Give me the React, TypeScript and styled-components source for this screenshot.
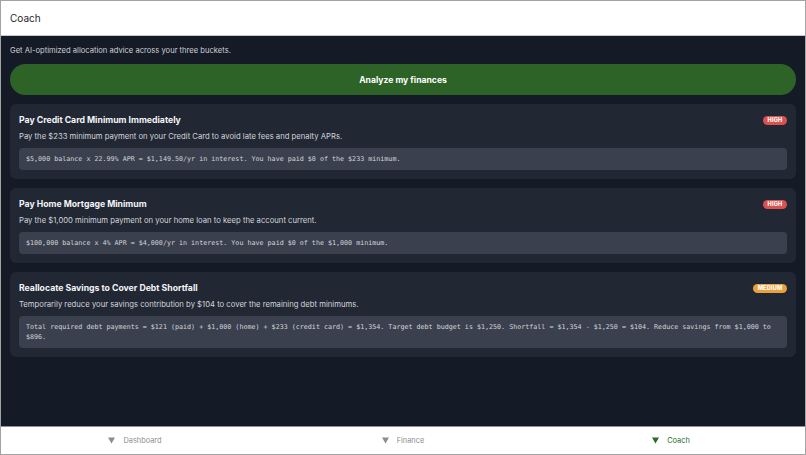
import React from "react";
import styled, { createGlobalStyle } from "styled-components";

type Priority = "high" | "medium";

interface Advice {
  id: string;
  title: string;
  description: string;
  detail: string;
  priority: Priority;
}

const advice: Advice[] = [
  {
    id: "cc",
    title: "Pay Credit Card Minimum Immediately",
    description:
      "Pay the $233 minimum payment on your Credit Card to avoid late fees and penalty APRs.",
    detail:
      "$5,000 balance x 22.99% APR = $1,149.50/yr in interest. You have paid $0 of the $233 minimum.",
    priority: "high",
  },
  {
    id: "home",
    title: "Pay Home Mortgage Minimum",
    description:
      "Pay the $1,000 minimum payment on your home loan to keep the account current.",
    detail:
      "$100,000 balance x 4% APR = $4,000/yr in interest. You have paid $0 of the $1,000 minimum.",
    priority: "high",
  },
  {
    id: "savings",
    title: "Reallocate Savings to Cover Debt Shortfall",
    description:
      "Temporarily reduce your savings contribution by $104 to cover the remaining debt minimums.",
    detail:
      "Total required debt payments = $121 (paid) + $1,000 (home) + $233 (credit card) = $1,354. Target debt budget is $1,250. Shortfall = $1,354 - $1,250 = $104. Reduce savings from $1,000 to $896.",
    priority: "medium",
  },
];

const tabs = ["Dashboard", "Finance", "Coach"];

const GlobalStyle = createGlobalStyle`
  html, body {
    margin: 0;
    padding: 0;
  }
  body {
    font-family: Inter, "Liberation Sans", sans-serif;
  }
  * {
    box-sizing: border-box;
  }
`;

const Frame = styled.div`
  height: 455px;
  display: flex;
  flex-direction: column;
  border: 1px solid #a3a3a3;
  background: #141a26;
  overflow: hidden;
`;

const Header = styled.header`
  height: 35px;
  flex: none;
  display: flex;
  align-items: center;
  padding: 0 9px;
  background: #ffffff;
  border-bottom: 1px solid #c8c8c8;
  font-size: 10px;
  color: #1f1f1f;
`;

const Main = styled.main`
  flex: 1;
  display: flex;
  flex-direction: column;
  padding: 9px 9px 0;
`;

const Subtitle = styled.p`
  margin: 0 0 7px;
  font-size: 7.6px;
  line-height: 12px;
  color: #cdd1d8;
`;

const AnalyzeButton = styled.button`
  height: 31px;
  width: 100%;
  border: none;
  border-radius: 16px;
  background: #2e6328;
  color: #ffffff;
  font-family: inherit;
  font-size: 8.6px;
  font-weight: 700;
  margin-bottom: 9px;
`;

const CardList = styled.div`
  display: flex;
  flex-direction: column;
  gap: 9px;
`;

const Card = styled.section`
  background: #212733;
  border-radius: 6px;
  padding: 10px 9px 9px;
`;

const CardHeader = styled.div`
  display: flex;
  align-items: center;
  justify-content: space-between;
  height: 12px;
`;

const CardTitle = styled.h3`
  margin: 0;
  font-size: 8.7px;
  font-weight: 700;
  color: #f4f5f7;
`;

const Badge = styled.span<{ $priority: Priority }>`
  display: inline-flex;
  align-items: center;
  height: 9px;
  padding: 0 4.5px;
  border-radius: 5px;
  font-size: 5.6px;
  font-weight: 800;
  letter-spacing: 0.2px;
  color: #ffffff;
  background: ${(p) => (p.$priority === "high" ? "#d9524f" : "#e9a23b")};
`;

const CardText = styled.p`
  margin: 5px 0 0;
  font-size: 7.7px;
  line-height: 11px;
  color: #d3d6dc;
`;

const Detail = styled.div`
  margin-top: 6px;
  padding: 6px 7px;
  border-radius: 4px;
  background: #3a404d;
  font-family: "DejaVu Sans Mono", "Liberation Mono", monospace;
  font-size: 6.7px;
  line-height: 10px;
  color: #d3d6dc;
`;

const Nav = styled.nav`
  height: 28px;
  flex: none;
  display: grid;
  grid-template-columns: repeat(3, 1fr);
  background: #ffffff;
  border-top: 1px solid #8f9196;
`;

const Tab = styled.div<{ $active: boolean }>`
  display: flex;
  align-items: center;
  justify-content: center;
  gap: 8px;
  font-size: 7.4px;
  color: ${(p) => (p.$active ? "#2e6b28" : "#8d8d8d")};
`;

const TabIcon = ({ color }: { color: string }) => (
  <svg width="7" height="7" viewBox="0 0 7 7">
    <polygon points="0,0.5 7,0.5 3.5,6.5" fill={color} />
  </svg>
);

export default function App() {
  return (
    <>
      <GlobalStyle />
      <Frame>
        <Header>Coach</Header>
        <Main>
          <Subtitle>
            Get AI-optimized allocation advice across your three buckets.
          </Subtitle>
          <AnalyzeButton>Analyze my finances</AnalyzeButton>
          <CardList>
            {advice.map((item) => (
              <Card key={item.id}>
                <CardHeader>
                  <CardTitle>{item.title}</CardTitle>
                  <Badge $priority={item.priority}>
                    {item.priority.toUpperCase()}
                  </Badge>
                </CardHeader>
                <CardText>{item.description}</CardText>
                <Detail>{item.detail}</Detail>
              </Card>
            ))}
          </CardList>
        </Main>
        <Nav>
          {tabs.map((tab) => {
            const active = tab === "Coach";
            return (
              <Tab key={tab} $active={active}>
                <TabIcon color={active ? "#2e6b28" : "#8d8d8d"} />
                {tab}
              </Tab>
            );
          })}
        </Nav>
      </Frame>
    </>
  );
}
